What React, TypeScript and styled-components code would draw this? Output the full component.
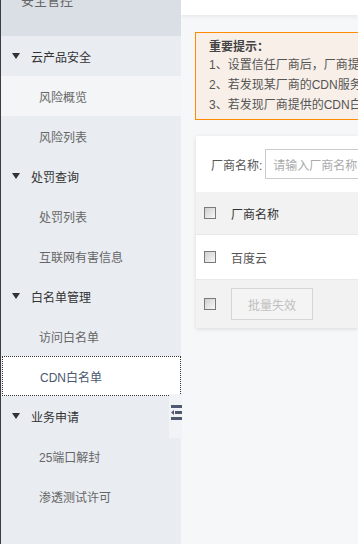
import React from 'react';
import styled, { createGlobalStyle } from 'styled-components';

const GlobalStyle = createGlobalStyle`
  html, body {
    margin: 0;
    padding: 0;
    height: 100%;
    overflow: hidden;
  }
  body {
    font-family: "Liberation Sans", "Noto Sans CJK SC", sans-serif;
    font-size: 12px;
    color: #333;
    background: #f5f7f9;
  }
`;

const Page = styled.div`
  display: flex;
  width: 358px;
  height: 544px;
  overflow: hidden;
`;

const Sidebar = styled.div`
  position: relative;
  width: 180px;
  flex-shrink: 0;
  background: #e9ecf1;
  border-left: 1px solid #3a3d42;
  display: flex;
  flex-direction: column;
`;

const Brand = styled.div`
  height: 36px;
  background: #dadee5;
  color: #666;
  font-size: 13px;
  padding-left: 20px;
  box-sizing: border-box;
  line-height: 2px;
  overflow: hidden;
`;

const GroupHead = styled.div`
  height: 40px;
  display: flex;
  align-items: center;
  padding-left: 11px;
  color: #333;
  font-size: 12px;
`;

const Caret = styled.span`
  width: 0;
  height: 0;
  border-left: 4.5px solid transparent;
  border-right: 4.5px solid transparent;
  border-top: 6px solid #333;
  margin-right: 11px;
`;

const Item = styled.div<{ $active?: boolean; $focus?: boolean }>`
  height: 40px;
  display: flex;
  align-items: center;
  box-sizing: border-box;
  color: ${(p) => (p.$focus ? '#4a5670' : '#666')};
  background: ${(p) => (p.$focus ? '#fff' : p.$active ? '#f3f5f7' : 'transparent')};
  border: ${(p) => (p.$focus ? '1px dotted #333' : 'none')};
  margin-left: ${(p) => (p.$focus ? '1px' : '0')};
  padding-left: ${(p) => (p.$focus ? '37px' : '38px')};
`;

const Toggle = styled.div`
  position: absolute;
  right: -1px;
  top: 394px;
  width: 13px;
  height: 44px;
  background: #f1f3f6;
  display: flex;
  align-items: flex-start;
  padding-top: 11px;
  box-sizing: border-box;
  justify-content: flex-end;
`;

const Main = styled.div`
  flex: 1;
  background: #f5f7f9;
  display: flex;
  flex-direction: column;
  min-width: 0;
`;

const TopBar = styled.div`
  height: 15px;
  background: #fff;
  box-shadow: 0 2px 4px rgba(0, 0, 0, 0.06);
`;

const Content = styled.div`
  padding: 17px 0 0 14px;
  display: flex;
  flex-direction: column;
  gap: 16px;
`;

const Notice = styled.div`
  border: 1px solid #ff8c00;
  border-right: none;
  background: #f7efe8;
  padding: 7px 0 6px 13px;
  height: 88px;
  box-sizing: border-box;
  color: #555;
  white-space: nowrap;
  overflow: hidden;
  line-height: 20px;
`;

const NoticeTitle = styled.div`
  font-weight: bold;
  color: #444;
  line-height: 14px;
  margin-bottom: 1px;
`;

const Card = styled.div`
  margin-left: 1px;
  background: #fff;
  box-shadow: 0 1px 4px rgba(0, 0, 0, 0.12);
  height: 192px;
  display: flex;
  flex-direction: column;
`;

const Filter = styled.div`
  height: 56px;
  display: flex;
  align-items: center;
  padding-left: 15px;
  white-space: nowrap;
  color: #555;
`;

const Input = styled.div`
  margin-left: 3px;
  height: 30px;
  flex: 1;
  border: 1px solid #ccc;
  border-right: none;
  box-sizing: border-box;
  display: flex;
  align-items: center;
  padding-left: 7px;
  color: #aaa;
  overflow: hidden;
`;

const Row = styled.div<{ $head?: boolean; $foot?: boolean }>`
  height: ${(p) => (p.$foot ? '48px' : p.$head ? '43px' : '45px')};
  display: flex;
  align-items: center;
  padding-left: 8px;
  gap: 15px;
  background: ${(p) => (p.$head || p.$foot ? '#f2f2f2' : '#fff')};
  border-bottom: ${(p) => (p.$foot ? 'none' : '1px solid #e8e8e8')};
  box-sizing: border-box;
  color: ${(p) => (p.$head ? '#333' : '#555')};
  white-space: nowrap;
`;

const Check = styled.span`
  width: 12px;
  height: 12px;
  border: 1px solid #7a7a7a;
  box-sizing: border-box;
  background: linear-gradient(135deg, #cfcfcf, #f8f8f8);
  flex-shrink: 0;
`;

const Button = styled.button`
  height: 32px;
  width: 82px;
  border: 1px solid #d6d6d6;
  background: #f4f4f4;
  color: #c0c0c0;
  font-family: inherit;
  font-size: 12px;
  padding: 0;
`;

export default function App() {
  return (
    <Page>
      <GlobalStyle />
      <Sidebar>
        <Brand>安全管控</Brand>
        <GroupHead><Caret />云产品安全</GroupHead>
        <Item $active>风险概览</Item>
        <Item>风险列表</Item>
        <GroupHead><Caret />处罚查询</GroupHead>
        <Item>处罚列表</Item>
        <Item>互联网有害信息</Item>
        <GroupHead><Caret />白名单管理</GroupHead>
        <Item>访问白名单</Item>
        <Item $focus>CDN白名单</Item>
        <GroupHead><Caret />业务申请</GroupHead>
        <Item>25端口解封</Item>
        <Item>渗透测试许可</Item>
        <Toggle>
          <svg width="11" height="15" viewBox="0 0 11 15">
            <rect x="0" y="0" width="11" height="3" fill="#4e5a70" />
            <rect x="4" y="6" width="7" height="3" fill="#4e5a70" />
            <path d="M0 7.5 L3 5 L3 10 Z" fill="#4e5a70" />
            <rect x="0" y="12" width="11" height="3" fill="#4e5a70" />
          </svg>
        </Toggle>
      </Sidebar>
      <Main>
        <TopBar />
        <Content>
          <Notice>
            <NoticeTitle>重要提示：</NoticeTitle>
            <div>1、设置信任厂商后，厂商提供的CDN服务</div>
            <div>2、若发现某厂商的CDN服务存在问题</div>
            <div>3、若发现厂商提供的CDN白名单有误</div>
          </Notice>
          <Card>
            <Filter>
              厂商名称:
              <Input>请输入厂商名称</Input>
            </Filter>
            <Row $head><Check /><span>厂商名称</span></Row>
            <Row><Check /><span>百度云</span></Row>
            <Row $foot><Check /><Button>批量失效</Button></Row>
          </Card>
        </Content>
      </Main>
    </Page>
  );
}
